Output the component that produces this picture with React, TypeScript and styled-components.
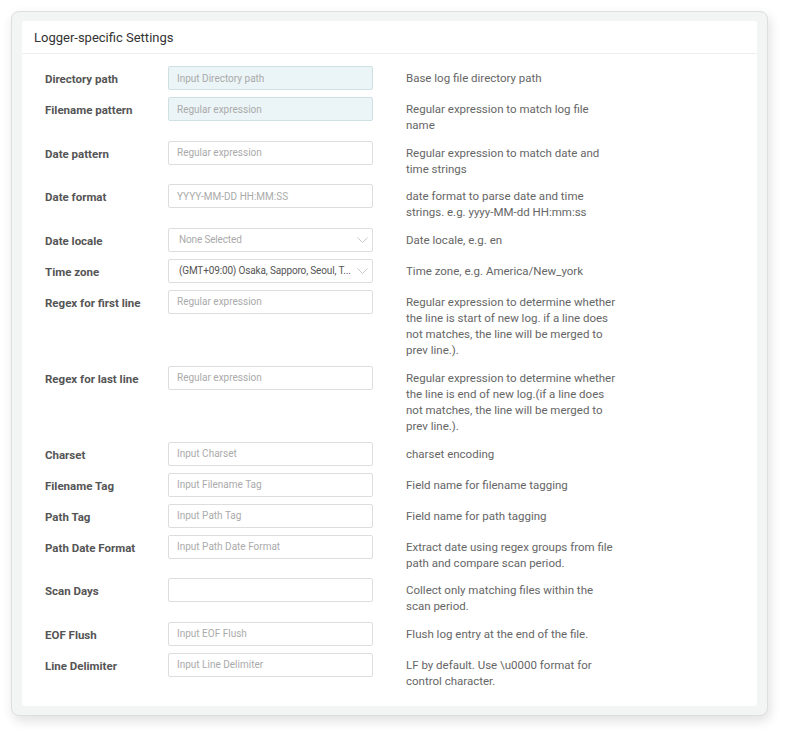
import styled, { createGlobalStyle } from "styled-components";

const GlobalStyle = createGlobalStyle`
  html, body {
    margin: 0;
    padding: 0;
    background: #ffffff;
    font-family: Roboto, "Liberation Sans", Arial, sans-serif;
  }
  * {
    box-sizing: border-box;
  }
`;

const Page = styled.div`
  padding: 11px 23px 22px 11px;
`;

const Frame = styled.div`
  width: 757px;
  background: #f3f4f4;
  border: 1px solid #dcdedf;
  border-radius: 8px;
  padding: 9px 10px 9px 10px;
  box-shadow: 2px 5px 12px rgba(0, 0, 0, 0.12);
`;

const Card = styled.section`
  background: #ffffff;
  border-radius: 3px;
`;

const CardHeader = styled.header`
  height: 33px;
  padding: 1px 12px 0;
  display: flex;
  align-items: center;
  border-bottom: 1px solid #eeeeee;
  font-size: 13px;
  color: #333333;
`;

const CardBody = styled.div`
  padding: 12px 23px 10px;
`;

const Row = styled.div`
  display: flex;
  align-items: flex-start;
  margin-bottom: 7px;
`;

const Label = styled.label`
  width: 123px;
  flex-shrink: 0;
  height: 24px;
  padding-top: 2px;
  display: flex;
  align-items: center;
  font-size: 11.5px;
  font-weight: 700;
  color: #555555;
`;

const Field = styled.div`
  position: relative;
  width: 205px;
  flex-shrink: 0;
`;

const Input = styled.input<{ $tinted?: boolean }>`
  display: block;
  width: 100%;
  height: 24px;
  padding: 0 8px;
  font-family: inherit;
  font-size: 10px;
  color: #555555;
  border: 1px solid ${(p) => (p.$tinted ? "#cfe0e4" : "#dddddd")};
  background: ${(p) => (p.$tinted ? "#ebf4f6" : "#ffffff")};
  border-radius: 2px;
  outline: none;

  &::placeholder {
    color: #aaaaaa;
  }
`;

const Select = styled.div<{ $empty?: boolean }>`
  height: 24px;
  padding: 0 20px 0 10px;
  display: flex;
  align-items: center;
  font-size: 10px;
  color: ${(p) => (p.$empty ? "#aaaaaa" : "#555555")};
  border: 1px solid #dddddd;
  border-radius: 2px;
  background: #ffffff;
`;

const SelectText = styled.span`
  white-space: nowrap;
  letter-spacing: -0.15px;
`;

const Chevron = styled.svg`
  position: absolute;
  right: 5px;
  top: 9px;
`;

const Description = styled.div`
  width: 211px;
  margin-left: 33px;
  padding-top: 4px;
  font-size: 11.5px;
  line-height: 16.25px;
  color: #666666;
`;

type Item = {
  label: string;
  placeholder?: string;
  tinted?: boolean;
  select?: string;
  empty?: boolean;
  desc: string;
};

const ITEMS: Item[] = [
  { label: "Directory path", placeholder: "Input Directory path", tinted: true, desc: "Base log file directory path" },
  { label: "Filename pattern", placeholder: "Regular expression", tinted: true, desc: "Regular expression to match log file name" },
  { label: "Date pattern", placeholder: "Regular expression", desc: "Regular expression to match date and time strings" },
  { label: "Date format", placeholder: "YYYY-MM-DD HH:MM:SS", desc: "date format to parse date and time strings. e.g. yyyy-MM-dd HH:mm:ss" },
  { label: "Date locale", select: "None Selected", empty: true, desc: "Date locale, e.g. en" },
  { label: "Time zone", select: "(GMT+09:00) Osaka, Sapporo, Seoul, T...", desc: "Time zone, e.g. America/New_york" },
  {
    label: "Regex for first line",
    placeholder: "Regular expression",
    desc: "Regular expression to determine whether the line is start of new log. if a line does not matches, the line will be merged to prev line.).",
  },
  {
    label: "Regex for last line",
    placeholder: "Regular expression",
    desc: "Regular expression to determine whether the line is end of new log.(if a line does not matches, the line will be merged to prev line.).",
  },
  { label: "Charset", placeholder: "Input Charset", desc: "charset encoding" },
  { label: "Filename Tag", placeholder: "Input Filename Tag", desc: "Field name for filename tagging" },
  { label: "Path Tag", placeholder: "Input Path Tag", desc: "Field name for path tagging" },
  { label: "Path Date Format", placeholder: "Input Path Date Format", desc: "Extract date using regex groups from file path and compare scan period." },
  { label: "Scan Days", placeholder: "", desc: "Collect only matching files within the scan period." },
  { label: "EOF Flush", placeholder: "Input EOF Flush", desc: "Flush log entry at the end of the file." },
  { label: "Line Delimiter", placeholder: "Input Line Delimiter", desc: "LF by default. Use \\u0000 format for control character." },
];

const SettingRow = ({ item }: { item: Item }) => (
  <Row>
    <Label>{item.label}</Label>
    <Field>
      {item.select ? (
        <>
          <Select $empty={item.empty}>
            <SelectText>{item.select}</SelectText>
          </Select>
          <Chevron width="11" height="6" viewBox="0 0 11 6" fill="none">
            <path d="M0.5 0.5L5.5 5.5L10.5 0.5" stroke="#c8c8c8" strokeWidth="1" />
          </Chevron>
        </>
      ) : (
        <Input $tinted={item.tinted} placeholder={item.placeholder} />
      )}
    </Field>
    <Description>{item.desc}</Description>
  </Row>
);

const App = () => (
  <>
    <GlobalStyle />
    <Page>
      <Frame>
        <Card>
          <CardHeader>Logger-specific Settings</CardHeader>
          <CardBody>
            {ITEMS.map((item) => (
              <SettingRow key={item.label} item={item} />
            ))}
          </CardBody>
        </Card>
      </Frame>
    </Page>
  </>
);

export default App;
